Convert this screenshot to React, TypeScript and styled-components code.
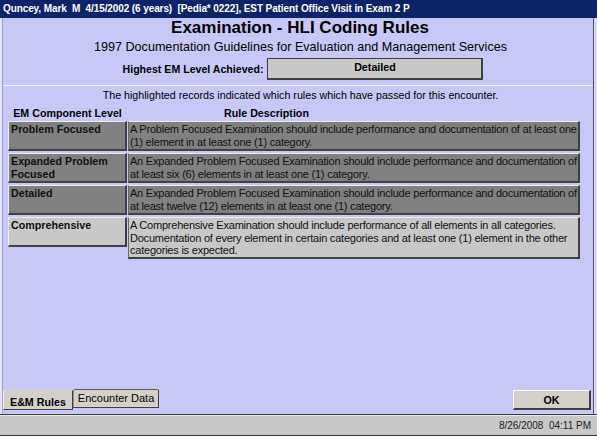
import React from "react";
import styled, { createGlobalStyle } from "styled-components";

const Global = createGlobalStyle`
  html, body { margin: 0; padding: 0; background: #c8c8f8; }
  body { font-family: "Liberation Sans", Arial, sans-serif; color: #000; }
  * { box-sizing: border-box; }
`;

const Window = styled.div`
  width: 597px;
  height: 436px;
  display: flex;
  flex-direction: column;
  overflow: hidden;
  background: #c8c8f8;
`;

const TitleBar = styled.div`
  height: 18px;
  flex: none;
  background: #0a246a;
  color: #fff;
  font-weight: bold;
  font-size: 10px;
  letter-spacing: -0.1px;
  line-height: 18px;
  padding-left: 3px;
  white-space: pre;
`;

const Main = styled.div`
  flex: 1;
  display: flex;
  flex-direction: column;
  border-left: 2px solid #e4e4f6;
  border-right: 3px solid #d8d8ee;
  box-shadow: inset 1px 0 0 #a0a0c4, inset -1px 0 0 #505068;
  padding-left: 1px;
  padding-right: 1px;
`;

const Header = styled.div`
  display: flex;
  flex-direction: column;
  align-items: center;
`;

const Title = styled.div`
  font-size: 17px;
  font-weight: bold;
  line-height: 20px;
  padding-left: 4px;
`;

const Subtitle = styled.div`
  font-size: 12.6px;
  line-height: 15px;
  margin-top: 2px;
  padding-left: 5px;
`;

const LevelRow = styled.div`
  display: flex;
  align-items: center;
  gap: 4px;
  margin-top: 3px;
  padding-left: 10px;
`;

const Label = styled.span`
  font-size: 10.6px;
  font-weight: bold;
`;

const LevelBox = styled.div`
  width: 216px;
  height: 22px;
  background: #c8c8c8;
  border: 1px solid #404040;
  border-right-width: 2px;
  border-bottom-width: 2px;
  text-align: center;
  font-size: 10.7px;
  font-weight: bold;
  padding-top: 2px;
`;

const Separator = styled.div`
  height: 1px;
  background: #f4f4ff;
  margin-top: 5px;
`;

const Note = styled.div`
  text-align: center;
  font-size: 10.7px;
  line-height: 13px;
  margin-top: 3px;
  padding-left: 5px;
`;

const Table = styled.div`
  display: flex;
  flex-direction: column;
  gap: 2px;
  padding-left: 5px;
  margin-top: 5px;
`;

const HeadRow = styled.div`
  display: flex;
  font-size: 10.7px;
  font-weight: bold;
  line-height: 13px;
  margin-bottom: -1px;
`;

const HeadLevel = styled.div`
  width: 119px;
  text-align: center;
`;

const HeadRule = styled.div`
  padding-left: 97px;
`;

const Row = styled.div`
  display: flex;
  align-items: flex-start;
  gap: 1px;
`;

const LevelCell = styled.div<{ $on: boolean }>`
  width: 119px;
  height: 30px;
  background: ${(p) => (p.$on ? "#808080" : "#c8c8c8")};
  border-top: 1px solid #ececec;
  border-left: 1px solid #ececec;
  border-right: 2px solid #404040;
  border-bottom: 2px solid #404040;
  padding: 1px 2px 0;
  font-size: 10.7px;
  font-weight: bold;
  line-height: 12.5px;
  color: #101010;
`;

const RuleCell = styled.div<{ $on: boolean }>`
  width: 452px;
  min-height: 30px;
  background: ${(p) => (p.$on ? "#808080" : "#c8c8c8")};
  border-top: 1px solid #ececec;
  border-left: 1px solid #6a6a6a;
  border-right: 2px solid #404040;
  border-bottom: 2px solid #404040;
  padding: 1px 1px 0;
  font-size: 11px;
  letter-spacing: -0.22px;
  line-height: 12.5px;
  color: #101010;
`;

const Line = styled.div`
  white-space: nowrap;
`;

const Spacer = styled.div`
  flex: 1;
`;

const BottomBar = styled.div`
  display: flex;
  align-items: flex-end;
  justify-content: space-between;
  padding: 0 2px 4px 0;
`;

const Tabs = styled.div`
  display: flex;
  align-items: flex-end;
`;

const Tab = styled.div<{ $active: boolean }>`
  height: ${(p) => (p.$active ? 20 : 19)}px;
  margin-bottom: ${(p) => (p.$active ? 0 : 2)}px;
  padding: 0 ${(p) => (p.$active ? 6 : 4)}px;
  background: #d4d0c8;
  font-size: ${(p) => (p.$active ? 10.7 : 11)}px;
  font-weight: ${(p) => (p.$active ? "bold" : "normal")};
  line-height: ${(p) => (p.$active ? 22 : 16)}px;
  border: 1px solid ${(p) => (p.$active ? "#d4d0c8" : "#606060")};
  border-left-color: ${(p) => (p.$active ? "#f4f4f4" : "#909090")};
  border-bottom: 1px solid #404040;
  border-right: 1px solid #404040;
  border-top-left-radius: ${(p) => (p.$active ? 0 : 2)}px;
  border-top-right-radius: ${(p) => (p.$active ? 0 : 2)}px;
`;

const OkButton = styled.button`
  width: 78px;
  height: 20px;
  margin-bottom: 0;
  background: #d4d0c8;
  border: none;
  border-top: 1px solid #ffffff;
  border-left: 1px solid #ffffff;
  border-right: 2px solid #404040;
  border-bottom: 2px solid #404040;
  font-family: "Liberation Sans", Arial, sans-serif;
  font-size: 10.7px;
  font-weight: bold;
  padding: 0;
  color: #000;
`;

const StatusBar = styled.div`
  height: 22px;
  flex: none;
  background: #c8c8c8;
  border-top: 1px solid #404040;
  border-bottom: 1px solid #303030;
  box-shadow: inset 0 1px 0 #e8e8e8;
  display: flex;
  align-items: center;
  justify-content: flex-end;
  padding-right: 6px;
  font-size: 10px;
  color: #202020;
  white-space: pre;
`;

type Rule = { level: string; lines: string[]; on: boolean };

const rules: Rule[] = [
  {
    level: "Problem Focused",
    on: true,
    lines: [
      "A Problem Focused Examination should include performance and documentation of at least one",
      "(1) element in at least one (1) category.",
    ],
  },
  {
    level: "Expanded Problem Focused",
    on: true,
    lines: [
      "An Expanded Problem Focused Examination should include performance and documentation of",
      "at least six (6) elements in at least one (1) category.",
    ],
  },
  {
    level: "Detailed",
    on: true,
    lines: [
      "An Expanded Problem Focused Examination should include performance and documentation of",
      "at least twelve (12) elements in at least one (1) category.",
    ],
  },
  {
    level: "Comprehensive",
    on: false,
    lines: [
      "A Comprehensive Examination should include performance of all elements in all categories.",
      "Documentation of every element in certain categories and at least one (1) element in the other",
      "categories is expected.",
    ],
  },
];

export default function App() {
  return (
    <>
      <Global />
      <Window>
        <TitleBar>
          {"Quncey, Mark  M  4/15/2002 (6 years)  [Pedia* 0222], EST Patient Office Visit in Exam 2 P"}
        </TitleBar>
        <Main>
          <Header>
            <Title>Examination - HLI Coding Rules</Title>
            <Subtitle>1997 Documentation Guidelines for Evaluation and Management Services</Subtitle>
            <LevelRow>
              <Label>Highest EM Level Achieved:</Label>
              <LevelBox>Detailed</LevelBox>
            </LevelRow>
          </Header>
          <Separator />
          <Note>The highlighted records indicated which rules which have passed for this encounter.</Note>
          <Table>
            <HeadRow>
              <HeadLevel>EM Component Level</HeadLevel>
              <HeadRule>Rule Description</HeadRule>
            </HeadRow>
            {rules.map((r) => (
              <Row key={r.level}>
                <LevelCell $on={r.on}>{r.level}</LevelCell>
                <RuleCell $on={r.on}>
                  {r.lines.map((l, i) => (
                    <Line key={i}>{l}</Line>
                  ))}
                </RuleCell>
              </Row>
            ))}
          </Table>
          <Spacer />
          <BottomBar>
            <Tabs>
              <Tab $active>E&amp;M Rules</Tab>
              <Tab $active={false}>Encounter Data</Tab>
            </Tabs>
            <OkButton>OK</OkButton>
          </BottomBar>
        </Main>
        <StatusBar>{"8/26/2008  04:11 PM"}</StatusBar>
      </Window>
    </>
  );
}
